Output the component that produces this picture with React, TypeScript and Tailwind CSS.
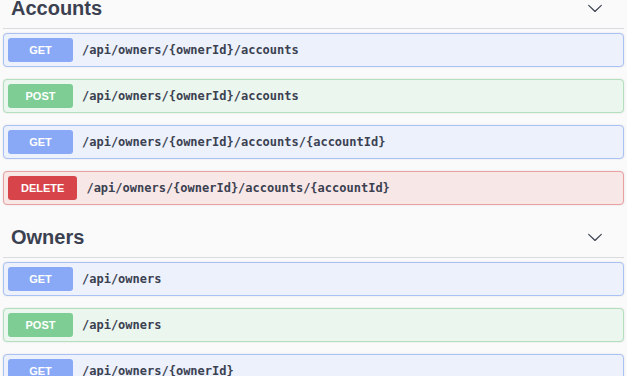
import React from "react";

type Method = "GET" | "POST" | "DELETE";

const styles: Record<Method, { box: string; badge: string }> = {
  GET: { box: "bg-[#ecf1fc] border-[#a9c1f4]", badge: "bg-[#89a8f6]" },
  POST: { box: "bg-[#ebf6ee] border-[#b3dfbf]", badge: "bg-[#7ecd95]" },
  DELETE: { box: "bg-[#f8e7e7] border-[#e8a0a1]", badge: "bg-[#d7454a]" },
};

function Op({ method, path }: { method: Method; path: string }) {
  const s = styles[method];
  return (
    <div
      className={`flex items-center h-[34px] border rounded-[4px] p-[4px] mb-[12px] shadow-[0_0_2px_rgba(0,0,0,0.12)] ${s.box}`}
    >
      <div
        className={`min-w-[65px] px-[13px] h-[24px] rounded-[3px] flex items-center justify-center text-white text-[11px] font-bold ${s.badge}`}
        style={{ fontFamily: '"Liberation Sans", Arial, sans-serif' }}
      >
        {method}
      </div>
      <div
        className="pl-[9px] text-[12px] font-bold text-[#3b4151] whitespace-nowrap"
        style={{ fontFamily: '"DejaVu Sans Mono", "Liberation Mono", monospace' }}
      >
        {path}
      </div>
    </div>
  );
}

function Chevron() {
  return (
    <svg width="16" height="16" viewBox="0 0 20 20" className="fill-[#3b4151]">
      <path d="M17.418 6.109c.272-.268.709-.268.979 0s.271.701 0 .969l-7.908 7.83c-.27.268-.707.268-.979 0l-7.908-7.83c-.27-.268-.27-.701 0-.969.271-.268.709-.268.979 0L10 13.25l7.418-7.141z" />
    </svg>
  );
}

function Heading({ title }: { title: string }) {
  return (
    <div className="flex items-center justify-between h-[41px] border-b border-[#d9dbde] pl-[8px] pr-[21px] mb-[4px]">
      <span
        className="text-[20px] font-bold text-[#3b4151]"
        style={{ fontFamily: '"Liberation Sans", Arial, sans-serif' }}
      >
        {title}
      </span>
      <Chevron />
    </div>
  );
}

export default function App() {
  return (
    <div className="w-[627px] h-[376px] overflow-hidden bg-[#fafafa]">
      <div className="mx-[3px] mt-[-12px]">
        <Heading title="Accounts" />
        <Op method="GET" path="/api/owners/{ownerId}/accounts" />
        <Op method="POST" path="/api/owners/{ownerId}/accounts" />
        <Op method="GET" path="/api/owners/{ownerId}/accounts/{accountId}" />
        <Op method="DELETE" path="/api/owners/{ownerId}/accounts/{accountId}" />
        <Heading title="Owners" />
        <Op method="GET" path="/api/owners" />
        <Op method="POST" path="/api/owners" />
        <Op method="GET" path="/api/owners/{ownerId}" />
      </div>
    </div>
  );
}
